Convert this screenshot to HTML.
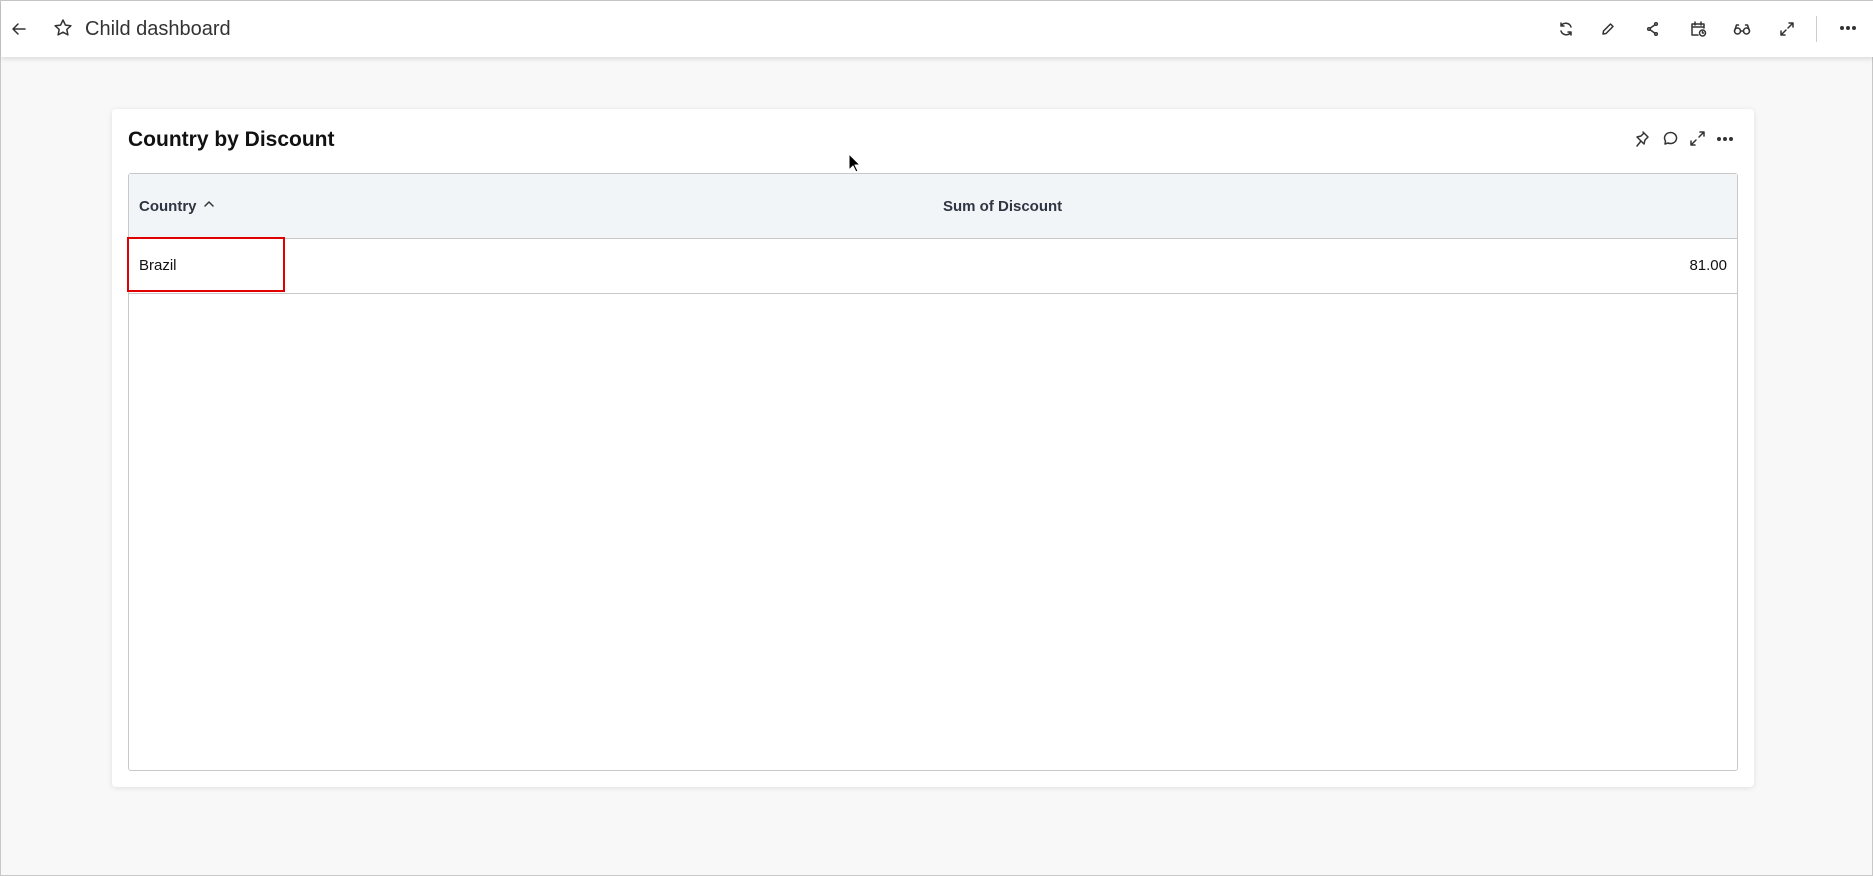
<!DOCTYPE html>
<html><head><meta charset="utf-8"><style>
*{box-sizing:border-box;margin:0;padding:0}
body{width:1873px;height:876px;background:#f8f8f8;font-family:"Liberation Sans",sans-serif;position:relative;overflow:hidden;border:1px solid #c8c8c8}
.top{position:absolute;left:0;top:0;width:1873px;height:56px;background:#fff;box-shadow:0 2px 5px rgba(0,0,0,.12)}
.ab{position:absolute}
.t{position:absolute;left:84px;top:17px;font-size:20px;color:#333}
.card{position:absolute;left:111px;top:108px;width:1642px;height:678px;background:#fff;border-radius:4px;box-shadow:0 1px 6px rgba(0,0,0,.1)}
.ttl{position:absolute;left:127px;top:127px;font-size:21px;font-weight:bold;color:#111}
.tbl{position:absolute;left:127px;top:172px;width:1610px;height:598px;border:1px solid #c8c8c8;border-radius:3px}
.hd{position:absolute;left:0;top:0;width:100%;height:65px;background:#f2f5f8;border-bottom:1px solid #c8c8c8}
.row{position:absolute;left:0;top:65px;width:100%;height:55px;border-bottom:1px solid #c8c8c8}
.h{position:absolute;font-size:15px;font-weight:bold;color:#2f3542;top:24px}
svg{position:absolute;fill:none;stroke:#333;stroke-width:1.5;stroke-linecap:round;stroke-linejoin:round}
</style></head><body>
<div class="top">
<svg style="left:9px;top:19px" width="18" height="18" viewBox="0 0 18 18"><path d="M15 9H3M8 4L3 9l5 5"/></svg>
<svg style="left:52px;top:17px" width="20" height="20" viewBox="0 0 20 20" stroke-width="1.3"><path d="M10 2l2.4 5.1 5.5.6-4.1 3.8 1.1 5.4L10 14.2 5.1 16.9l1.1-5.4L2.1 7.7l5.5-.6z"/></svg>
<div class="t">Child dashboard</div>
<svg style="left:1557px;top:20px" width="16" height="16" viewBox="0 0 16 16"><path d="M13 6a5.5 5.5 0 0 0-10-1M3 2v3h3M3 10a5.5 5.5 0 0 0 10 1M13 14v-3h-3"/></svg>
<svg style="left:1600px;top:21px" width="14" height="14" viewBox="0 0 14 14"><path d="M2 12l.5-3L9.5 2l2.5 2.5-7 7z"/></svg>
<svg style="left:1645px;top:20px" width="14" height="16" viewBox="0 0 14 16"><circle cx="10" cy="3" r="1.3"/><circle cx="3" cy="8" r="1.3"/><circle cx="10" cy="13" r="1.3"/><path d="M4 7.3l5-3.5M4 8.7l5 3.5"/></svg>
<svg style="left:1689px;top:19px" width="18" height="18" viewBox="0 0 18 18"><path d="M8 15H2V4h12v4M2 7h12M5 2v3M11 2v3"/><circle cx="12.5" cy="13" r="3"/><path d="M12.5 11.5V13h1"/></svg>
<svg style="left:1732px;top:20px" width="18" height="16" viewBox="0 0 18 16"><circle cx="4.5" cy="10" r="3"/><circle cx="13.5" cy="10" r="3"/><path d="M7.5 10h3M1.5 10l2-6h2M16.5 10l-2-6h-2"/></svg>
<svg style="left:1778px;top:20px" width="16" height="16" viewBox="0 0 16 16"><path d="M9 7l5-5M10 2h4v4M7 9l-5 5M2 10v4h4"/></svg>
<div class="ab" style="left:1815px;top:15px;width:1px;height:26px;background:#ccc"></div>
<div class="ab" style="left:1839px;top:25px;font-size:0">
<span style="display:inline-block;width:4px;height:4px;border-radius:2px;background:#333;margin-right:2px"></span><span style="display:inline-block;width:4px;height:4px;border-radius:2px;background:#333;margin-right:2px"></span><span style="display:inline-block;width:4px;height:4px;border-radius:2px;background:#333"></span></div>
</div>
<div class="card"></div>
<div class="ttl">Country by Discount</div>
<svg style="left:1634px;top:129px" width="16" height="18" viewBox="0 0 16 18" stroke-width="1.2"><path d="M2 16l4-5M4 9l5 5 1-4 3-3-4-4-3 3-4 1zM8 2l5 5"/></svg>
<svg style="left:1660px;top:129px" width="18" height="17" viewBox="0 0 18 17" stroke-width="1.2"><path d="M4 14l.5-3A6 5.5 0 1 1 7 13z"/></svg>
<svg style="left:1688px;top:129px" width="17" height="17" viewBox="0 0 17 17" stroke-width="1.2"><path d="M10 7l5-5M11 2h4v4M7 10l-5 5M2 11v4h4"/></svg>
<div class="ab" style="left:1716px;top:136px;font-size:0">
<span style="display:inline-block;width:4px;height:4px;border-radius:2px;background:#333;margin-right:2px"></span><span style="display:inline-block;width:4px;height:4px;border-radius:2px;background:#333;margin-right:2px"></span><span style="display:inline-block;width:4px;height:4px;border-radius:2px;background:#333"></span></div>
<div class="tbl">
<div class="hd">
<div class="h" style="left:10px">Country</div>
<svg style="left:74px;top:25px" width="12" height="10" viewBox="0 0 12 10" stroke-width="2"><path d="M2 7l4-4 4 4"/></svg>
<div class="h" style="left:814px">Sum of Discount</div>
</div>
<div class="row">
<div class="ab" style="left:10px;top:18px;font-size:15px;color:#111">Brazil</div>
<div class="ab" style="right:10px;top:18px;font-size:15px;color:#111">81.00</div>
</div>
</div>
<div class="ab" style="left:126px;top:236px;width:158px;height:55px;border:2px solid #e00000"></div>
<svg style="left:847px;top:152px;stroke:#fff;stroke-width:1;fill:#000" width="14" height="22" viewBox="0 0 14 22"><path d="M1 1v16l4-4 3 6 2-1-3-6h5z"/></svg>
</body></html>
